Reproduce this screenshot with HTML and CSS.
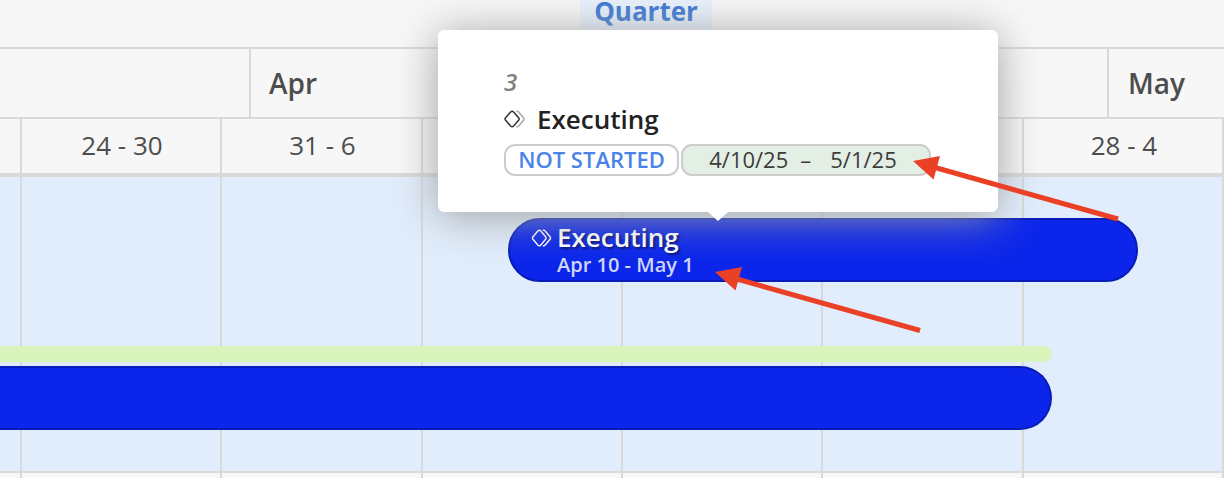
FILE: index.html
```
<!DOCTYPE html>
<html lang="en">
  <head>
    <meta charset="UTF-8" />
    <meta name="viewport" content="width=device-width, initial-scale=1.0" />
    <title>Timeline</title>
    <link rel="stylesheet" href="styles.css">
  </head>
  <body>
    <div class="timeline">
      <div class="toolbar">
        <button class="zoom-btn">Quarter</button>
      </div>

      <div class="months">
        <div class="month month-mar"></div>
        <div class="month month-apr">Apr</div>
        <div class="month">May</div>
      </div>

      <div class="weeks columns">
        <div class="cell"></div>
        <div class="cell">24 - 30</div>
        <div class="cell">31 - 6</div>
        <div class="cell"></div>
        <div class="cell"></div>
        <div class="cell"></div>
        <div class="cell">28 - 4</div>
      </div>

      <div class="chart">
        <div class="grid columns">
          <div class="cell"></div>
          <div class="cell"></div>
          <div class="cell"></div>
          <div class="cell"></div>
          <div class="cell"></div>
          <div class="cell"></div>
          <div class="cell"></div>
        </div>
        <div class="bars">
          <div class="bar bar-executing">
            <svg class="bar-icon" width="22" height="18" viewBox="0 0 22 18">
              <path d="M6.800 2q1.500-1.600 3 0l5 6q.8 1 0 2l-5 6q-1.500 1.600-3 0l-5-6q-.8-1 0-2z" />
              <path d="M11.800 1.300q1.500-.4 2.400.7l5 6q.8 1 0 2l-5 6q-.9 1.100-2.400.7" />
            </svg>
            <div class="bar-text">
              <div class="bar-title">Executing</div>
              <div class="bar-dates">Apr 10 - May 1</div>
            </div>
          </div>
          <div class="baseline"></div>
          <div class="bar bar-long"></div>
        </div>
      </div>
      <div class="columns next-row">
        <div class="cell"></div>
        <div class="cell"></div>
        <div class="cell"></div>
        <div class="cell"></div>
        <div class="cell"></div>
        <div class="cell"></div>
        <div class="cell"></div>
      </div>
    </div>

    <div class="popover">
      <div class="popover-id">3</div>
      <div class="popover-title">
        <svg class="popover-icon" width="22" height="18" viewBox="0 0 22 18">
          <path class="back" d="M12.300 1.300q1.500-.4 2.400.7l5 6q.8 1 0 2l-5 6q-.9 1.100-2.400.7" />
          <path d="M6.600 2q1.500-1.600 3 0l5.200 6q.8 1 0 2l-5.200 6q-1.500 1.600-3 0l-5.200-6q-.8-1 0-2z" />
        </svg>
        <span>Executing</span>
      </div>
      <div class="tags">
        <div class="tag status">NOT STARTED</div>
        <div class="tag dates"><span>4/10/25</span><span class="dash">–</span><span>5/1/25</span></div>
      </div>
    </div>

    <svg class="arrows" width="1224" height="478" viewBox="0 0 1224 478">
      <path class="line" d="M1118 219L935 167.500M920 330.500L737 279" />
      <path class="head" d="M913 161L940 156L933.500 179.500zM715 272L742 267L735.500 290.500z" />
    </svg>
  </body>
</html>
```
FILE: styles.css
```
* {
  margin: 0;
  padding: 0;
  box-sizing: border-box;
}

body {
  width: 1224px;
  height: 478px;
  overflow: hidden;
  position: relative;
  background: #f7f7f7;
  color: #4d4d4d;
  font-family: "Open Sans", "Noto Sans", sans-serif;
}

.timeline {
  display: flex;
  flex-direction: column;
  height: 478px;
}

/* header */
.toolbar {
  display: flex;
  align-items: flex-start;
  height: 49px;
  padding-left: 580px;
  border-bottom: 2px solid #d9d9d9;
}

.zoom-btn {
  width: 132px;
  height: 35px;
  padding-bottom: 13px;
  border: 0;
  border-radius: 0 0 6px 6px;
  background: #e8f1fd;
  color: #3b78d4;
  font: bold 26px/22px "Open Sans", sans-serif;
}

.months {
  display: flex;
  height: 70px;
  border-bottom: 2px solid #d9d9d9;
}

.month {
  padding-left: 19px;
  font-size: 28px;
  font-weight: 600;
  line-height: 69px;
}

.month-mar {
  width: 251px;
  border-right: 2px solid #d9d9d9;
}

.month-apr {
  width: 858px;
  padding-left: 18px;
  border-right: 2px solid #d9d9d9;
}

.columns {
  display: grid;
  grid-template-columns: 22px 200px 201px 200px 200px 201px 200px;
}

.cell {
  border-right: 2px solid #d9d9d9;
}

.weeks {
  height: 58px;
  border-bottom: 4px solid #d9d9d9;
  font-size: 26px;
  line-height: 52px;
  text-align: center;
}

.weeks .cell {
  padding-left: 2px;
}

/* chart */
.chart {
  display: grid;
  height: 296px;
  border-bottom: 2px solid #d9d9d9;
  background: #e1edfc;
}

.grid,
.bars {
  grid-area: 1 / 1;
}

.bars {
  padding-top: 41px;
}

.next-row {
  flex: 1;
}

.bar {
  height: 64px;
  border: 2px solid #071db5;
  background: #0b26ea;
}

.bar-executing {
  display: flex;
  width: 630px;
  margin-left: 508px;
  padding-left: 21px;
  border-radius: 32px;
  color: #fff;
}

.bar-icon {
  margin: 9px 4px 0 0;
  fill: none;
  stroke: #fff;
  stroke-width: 1.4;
}

.bar-title {
  height: 35px;
  font-size: 26px;
  font-weight: 600;
  line-height: 34px;
  text-shadow: 2px 2px 2px rgba(0, 0, 0, 0.5);
}

.bar-dates {
  color: #d0d6fb;
  font-size: 20px;
  font-weight: 600;
  line-height: 19px;
}

.baseline {
  width: 1052px;
  height: 16px;
  margin: 64px 0 4px;
  border-radius: 0 8px 8px 0;
  background: #d9f4bd;
}

.bar-long {
  width: 1052px;
  border-left: 0;
  border-radius: 0 32px 32px 0;
}

/* popover over the chart */
.popover {
  position: absolute;
  left: 438px;
  top: 30px;
  width: 560px;
  height: 182px;
  padding: 35px 66px 0;
  border-radius: 6px;
  background: #fff;
  box-shadow: 0 4px 44px #a0a0a0;
}

.popover::after {
  content: "";
  position: absolute;
  left: 270px;
  top: 182px;
  border: 10px solid transparent;
  border-top: 9px solid #fff;
  border-bottom: 0;
}

.popover-id {
  color: #808080;
  font-size: 24px;
  font-style: italic;
  font-weight: 600;
  line-height: 34px;
}

.popover-title {
  display: flex;
  align-items: center;
  gap: 11px;
  height: 40px;
  color: #222;
  font-size: 26px;
  font-weight: 600;
}

.popover-icon {
  fill: none;
  stroke: #333;
  stroke-width: 1.5;
}

.popover-icon .back {
  stroke: #aaa;
}

.tags {
  display: flex;
  gap: 2px;
  margin-top: 5px;
}

.tag {
  display: flex;
  justify-content: center;
  height: 32px;
  border: 2px solid #ccc;
  border-radius: 11px;
  font-size: 22px;
  line-height: 27px;
}

.status {
  width: 175px;
  color: #4b83e8;
  font-weight: 600;
}

.dates {
  width: 250px;
  padding-right: 6px;
  background: #e3efe4;
  color: #3c3c3c;
}

.dates .dash {
  margin: 0 19px 0 12px;
}

/* annotations */
.arrows {
  position: absolute;
  left: 0;
  top: 0;
}

.arrows .line {
  fill: none;
  stroke: #ea4025;
  stroke-width: 5;
}

.arrows .head {
  fill: #ea4025;
}
```
